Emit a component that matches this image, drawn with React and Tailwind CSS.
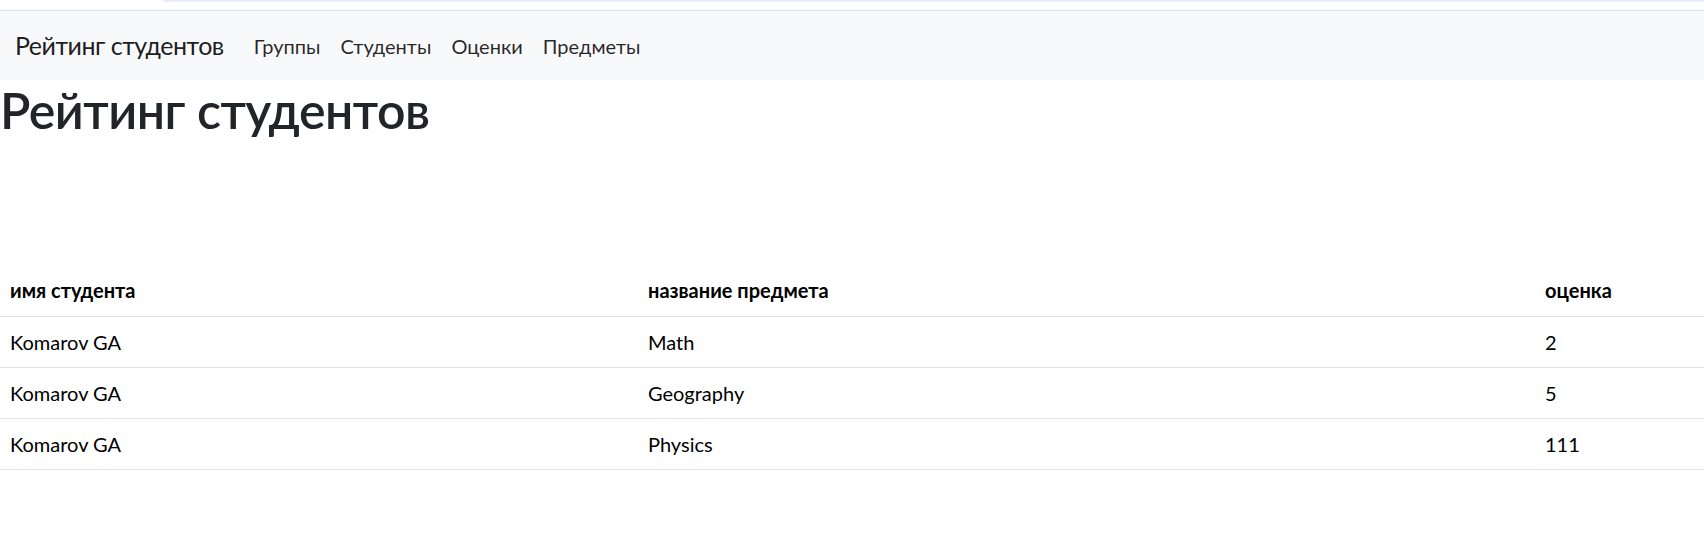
import React from "react";

const rows = [
    { name: "Komarov GA", subject: "Math", mark: "2" },
    { name: "Komarov GA", subject: "Geography", mark: "5" },
    { name: "Komarov GA", subject: "Physics", mark: "111" },
];

const links = ["Группы", "Студенты", "Оценки", "Предметы"];

const App = () => {
    return (
        <div className="min-h-[552px] bg-white font-['Lato','Open_Sans',sans-serif] text-[#212529]">
            {/* browser strip */}
            <div className="h-[10px] flex">
                <div className="w-[163px]" />
                <div className="flex-1 h-[2px] bg-[#e9ecf8] rounded-bl-[3px]" />
            </div>

            {/* Navbar */}
            <nav className="h-[70px] border-t border-[#dee2e6] bg-[#f8f9fa] flex items-center px-[15px]">
                <a className="text-[25px] leading-[38px] tracking-[-0.5px] text-black/90 mr-[20px] pb-[2px]">Рейтинг студентов</a>
                <ul className="flex items-center">
                    {links.map((link) => (
                        <li key={link}>
                            <a className="block px-[10px] text-[20px] leading-[30px] text-black/85">{link}</a>
                        </li>
                    ))}
                </ul>
            </nav>

            <h1 className="text-[50px] leading-[60px] tracking-[-0.5px] font-semibold mb-[10px]">Рейтинг студентов</h1>

            <table className="w-full mt-[125px] text-[20px] text-black border-collapse">
                <thead>
                    <tr className="border-b border-[#dee2e6]">
                        <th className="w-[638px] text-left font-bold px-[10px] h-[51px]">имя студента</th>
                        <th className="w-[897px] text-left font-bold px-[10px]">название предмета</th>
                        <th className="text-left font-bold px-[10px]">оценка</th>
                    </tr>
                </thead>
                <tbody>
                    {rows.map((row, i) => (
                        <tr key={i} className="border-b border-[#dee2e6]">
                            <td className="px-[10px] h-[51px]">{row.name}</td>
                            <td className="px-[10px]">{row.subject}</td>
                            <td className="px-[10px]">{row.mark}</td>
                        </tr>
                    ))}
                </tbody>
            </table>
        </div>
    );
};

export default App;
